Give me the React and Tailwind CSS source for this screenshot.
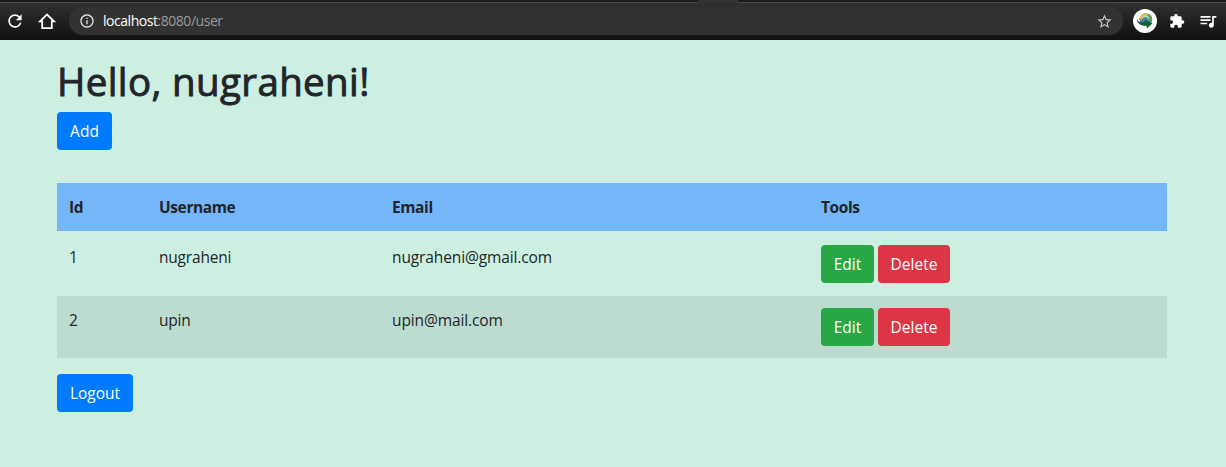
import React from "react";
import { MdRefresh, MdInfoOutline, MdStarBorder, MdExtension, MdQueueMusic } from "react-icons/md";

const users = [
  { id: 1, name: "nugraheni", email: "nugraheni@gmail.com" },
  { id: 2, name: "upin", email: "upin@mail.com" },
];

function HomeIcon() {
  return (
    <svg viewBox="0 0 18 18" className="h-[18px] w-[18px] shrink-0" fill="none" stroke="#fff" strokeWidth="1.8">
      <path d="M4.200 9.300H2L9 2.600l7 6.700h-2.200v6.800H4.200z" />
    </svg>
  );
}

function GlobeIcon() {
  return (
    <svg viewBox="0 0 24 24" className="h-6 w-6 shrink-0">
      <circle cx="12" cy="12" r="12" fill="#fff" />
      <circle cx="13" cy="10.500" r="6.200" fill="#3d86c6" />
      <path d="M7.500 7c2-3 5.500-3.600 8.500-2-1 2-2 2.500-4 3s-3 3-5.300 3z" fill="#d9c545" />
      <path d="M14.500 5c3 .5 4.800 3 4.600 6l-3.100 1-2.500-3z" fill="#6fa04a" />
      <path d="M4.200 9.500c.3 3 3.300 4.500 7.300 3.500v-2.500l8 3.800-5.500 5.200-.5-2.700C7.500 17 3.500 14 4.200 9.500z" fill="#14632b" />
      <path d="M6.500 9c.5 2.500 2 3.200 4.500 3" fill="none" stroke="#d3563b" strokeWidth="1" />
      <path d="M11 7.500c2-.7 4 .2 5 2" fill="none" stroke="#bfe3f5" strokeWidth="1.200" />
    </svg>
  );
}

function Button({ className, children }) {
  return (
    <button className={"h-[38px] shrink-0 rounded-[4px] pb-px text-center text-[15.5px] leading-6 text-white " + className}>
      {children}
    </button>
  );
}

export default function App() {
  return (
    <div className="flex h-[467px] w-[1226px] flex-col overflow-hidden bg-[#cdefe1] font-['Open_Sans','Noto_Sans',sans-serif] text-[#212529]">
      <div className="flex h-10 shrink-0 flex-col bg-linear-to-b from-[#333333] to-[#101111]">
        <div className="flex h-[3px] shrink-0 justify-between">
          <div className="w-[699px] rounded-br-[3px] border-b border-[#4c4c4c] bg-[#1b1b1b]" />
          <div className="w-[488px] rounded-bl-[3px] border-b border-[#4c4c4c] bg-[#1b1b1b]" />
        </div>
        <div className="flex items-center pt-1">
          <MdRefresh className="ml-[5px] h-5 w-5 shrink-0 text-white" />
          <div className="ml-[13px]"><HomeIcon /></div>
          <div className="ml-[13px] flex h-7 w-[1054px] items-center rounded-full bg-[#323232] pl-[10px] pr-[10px]">
            <MdInfoOutline className="h-4 w-4 shrink-0 text-[#e4e4e4]" />
            <div className="ml-2 text-[14px] leading-5 tracking-[-0.46px] text-[#999b9e]">
              <span className="text-white">localhost</span>:8080/user
            </div>
            <MdStarBorder className="ml-auto h-[17px] w-[17px] text-[#c8c8c8]" />
          </div>
          <div className="ml-[10px]"><GlobeIcon /></div>
          <MdExtension className="ml-3 h-4 w-4 shrink-0 text-white" />
          <MdQueueMusic className="ml-[13px] h-5 w-5 shrink-0 text-white" />
        </div>
      </div>

      <main className="ml-[57px] w-[1110px]">
        <h1 className="mt-[17px] h-[55px] whitespace-nowrap text-[38.5px] font-medium leading-[48px] tracking-[0.36px] [-webkit-text-stroke:0.9px_#212529]">
          Hello, nugraheni!
        </h1>
        <Button className="block w-[55px] bg-[#007bff]">Add</Button>

        <table className="mt-[33px] w-full table-fixed border-collapse text-left text-[15.5px] leading-6">
          <colgroup>
            <col className="w-[90px]" />
            <col className="w-[233px]" />
            <col className="w-[429px]" />
            <col />
          </colgroup>
          <thead>
            <tr className="h-12 bg-[#74b6f7] font-bold tracking-[-0.4px]">
              <th className="px-3 py-0">Id</th>
              <th className="px-3 py-0">Username</th>
              <th className="px-3 py-0">Email</th>
              <th className="px-3 py-0">Tools</th>
            </tr>
          </thead>
          <tbody className="align-top">
            {users.map((user) => (
              <tr key={user.id} className="h-[65px] even:h-[62px] even:bg-[#bddcd0] odd:[&>td]:pt-[14px] even:[&>td]:pt-3">
                <td className="px-3">{user.id}</td>
                <td className="px-3 tracking-[-0.2px]">{user.name}</td>
                <td className="px-3 tracking-[-0.12px]">{user.email}</td>
                <td className="px-3">
                  <div className="flex gap-1">
                    <Button className="w-[53px] bg-[#28a745]">Edit</Button>
                    <Button className="w-[72px] bg-[#dc3545]">Delete</Button>
                  </div>
                </td>
              </tr>
            ))}
          </tbody>
        </table>

        <Button className="mt-4 block w-[76px] bg-[#007bff]">Logout</Button>
      </main>
    </div>
  );
}
